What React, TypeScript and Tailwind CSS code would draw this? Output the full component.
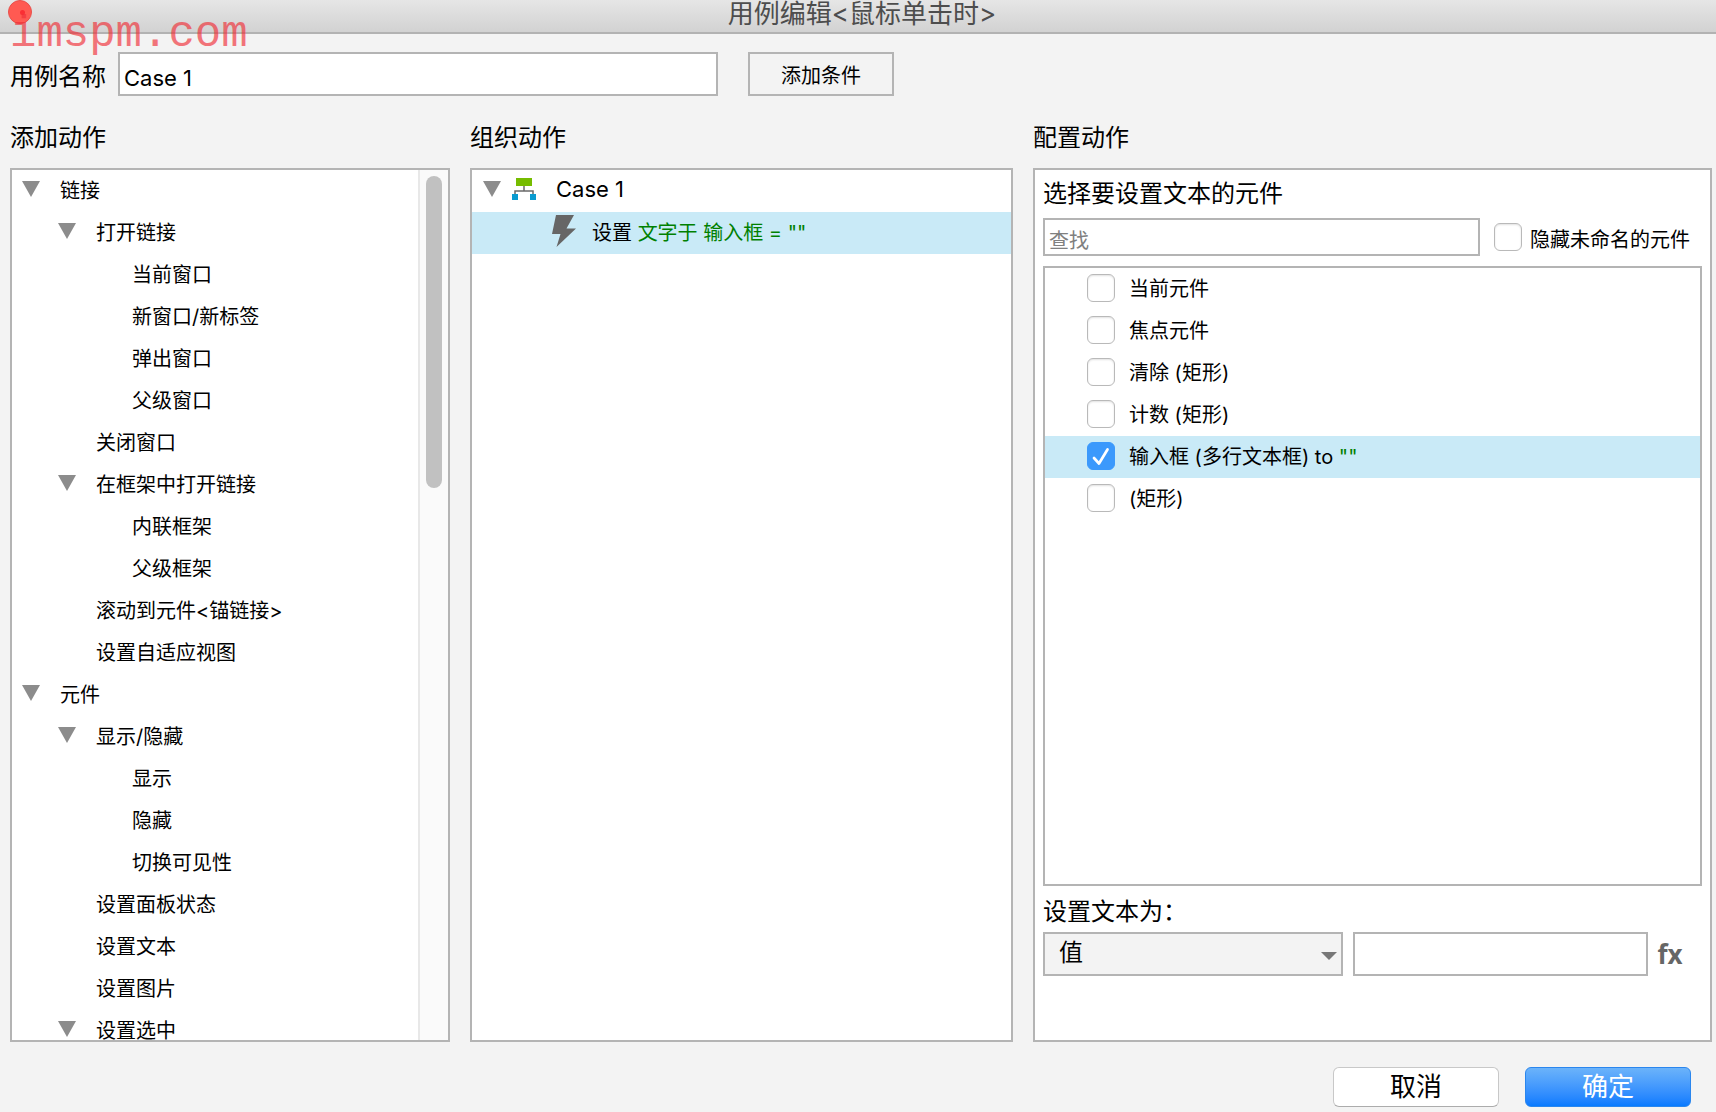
import { useState } from 'react';

interface TreeNode {
  label: string;
  level: number;
  open?: boolean;
}

const actions: TreeNode[] = [
  { label: '链接', level: 0, open: true },
  { label: '打开链接', level: 1, open: true },
  { label: '当前窗口', level: 2 },
  { label: '新窗口/新标签', level: 2 },
  { label: '弹出窗口', level: 2 },
  { label: '父级窗口', level: 2 },
  { label: '关闭窗口', level: 1 },
  { label: '在框架中打开链接', level: 1, open: true },
  { label: '内联框架', level: 2 },
  { label: '父级框架', level: 2 },
  { label: '滚动到元件<锚链接>', level: 1 },
  { label: '设置自适应视图', level: 1 },
  { label: '元件', level: 0, open: true },
  { label: '显示/隐藏', level: 1, open: true },
  { label: '显示', level: 2 },
  { label: '隐藏', level: 2 },
  { label: '切换可见性', level: 2 },
  { label: '设置面板状态', level: 1 },
  { label: '设置文本', level: 1 },
  { label: '设置图片', level: 1 },
  { label: '设置选中', level: 1, open: true },
];

const indents = ['pl-2.5', 'pl-[46px]', 'pl-[82px]'];

const initialWidgets = [
  { name: '当前元件', checked: false },
  { name: '焦点元件', checked: false },
  { name: '清除 (矩形)', checked: false },
  { name: '计数 (矩形)', checked: false },
  { name: '输入框 (多行文本框) to', value: '""', checked: true },
  { name: '(矩形)', checked: false },
];

const Arrow = () => (
  <svg className="w-[18px] h-4 shrink-0 fill-[#8c8c8c]" viewBox="0 0 18 16" aria-hidden="true">
    <path d="M0 0h18L9 16z" />
  </svg>
);

const CaseIcon = () => (
  <svg className="w-6 h-[22px] shrink-0" viewBox="0 0 24 22" aria-hidden="true">
    <path d="M12 8v5M3 17v-4h18v4" fill="none" stroke="#6a6a6a" strokeWidth="1.5" />
    <path d="M4 0h16v8H4z" fill="#76bc00" />
    <path d="M0 16h6v6H0zM18 16h6v6h-6z" fill="#0a9bd0" />
  </svg>
);

const Bolt = () => (
  <svg className="w-6 h-8 shrink-0 fill-[#666]" viewBox="0 0 24 32" aria-hidden="true">
    <path d="M4 0h18l-7.500 13.500H24L4.500 32l4-13H0z" />
  </svg>
);

interface CheckBoxProps {
  id: string;
  checked: boolean;
  onChange: () => void;
}

const CheckBox = ({ id, checked, onChange }: CheckBoxProps) => (
  <span className="relative w-7 h-7 shrink-0">
    <input
      id={id}
      type="checkbox"
      checked={checked}
      onChange={onChange}
      className="block appearance-none w-7 h-7 rounded-md bg-white border border-[#b9b9b9] shadow-[inset_0_1px_2px_rgba(0,0,0,0.12)] checked:bg-[#3b99fc] checked:border-[#3b99fc] checked:shadow-none"
    />
    {checked && (
      <svg className="absolute inset-0 w-7 h-7 pointer-events-none" viewBox="0 0 28 28" aria-hidden="true">
        <path d="M7 16l5 5.500L20.500 7.500" fill="none" stroke="#fff" strokeWidth="2.700" strokeLinecap="round" strokeLinejoin="round" />
      </svg>
    )}
  </span>
);

const ActionTree = () => (
  <div className="flex h-full">
    <ul className="flex-1 min-w-0 overflow-hidden">
      {actions.map(({ label, level, open }) => (
        <li key={label} className={`flex items-center h-[42px] gap-5 ${indents[level]}`}>
          <span className="flex w-[18px] pb-1 shrink-0">{open && <Arrow />}</span>
          <span className="whitespace-nowrap">{label}</span>
        </li>
      ))}
    </ul>
    <div className="w-[30px] shrink-0 bg-[#fafafa] border-l-2 border-[#e8e8e8] pt-1.5 pl-1.5">
      <div className="w-4 h-[312px] rounded-full bg-[#c1c1c1]" />
    </div>
  </div>
);

const CaseTree = () => (
  <ul>
    <li className="flex items-center h-[42px] pl-[11px] pb-1">
      <Arrow />
      <span className="ml-[11px]">
        <CaseIcon />
      </span>
      <span className="ml-5 text-[22px]">Case 1</span>
    </li>
    <li className="flex items-center h-[42px] pl-20 bg-[#c9eaf7]">
      <span className="pb-1">
        <Bolt />
      </span>
      <span className="ml-4 whitespace-pre">
        设置 <span className="text-[#008000]">文字于 输入框 = ""</span>
      </span>
    </li>
  </ul>
);

const ConfigPanel = () => {
  const [widgets, setWidgets] = useState(initialWidgets);
  const [hideUnnamed, setHideUnnamed] = useState(false);
  const [text, setText] = useState('');

  const toggle = (index: number) =>
    setWidgets(widgets.map((w, i) => (i === index ? { ...w, checked: !w.checked } : w)));

  return (
    <div className="flex flex-col h-full px-2 pt-1.5">
      <h3 className="text-[24px] leading-9">选择要设置文本的元件</h3>
      <div className="flex items-center mt-1.5 pr-3">
        <input
          type="text"
          aria-label="查找"
          placeholder="查找"
          className="flex-1 min-w-0 h-[38px] px-1 pt-2 bg-white border-2 border-[#b4b4b4] placeholder:text-[#808080]"
        />
        <label htmlFor="hide-unnamed" className="flex items-center gap-2 ml-3.5 whitespace-nowrap">
          <CheckBox id="hide-unnamed" checked={hideUnnamed} onChange={() => setHideUnnamed(!hideUnnamed)} />
          <span className="pt-1.5">隐藏未命名的元件</span>
        </label>
      </div>
      <ul className="flex-1 mt-2.5 border-2 border-[#b4b4b4]">
        {widgets.map(({ name, value, checked }, i) => (
          <li key={name} className={`flex items-center h-[42px] pl-[42px] ${checked ? 'bg-[#c9eaf7]' : ''}`}>
            <span className="pb-0.5">
              <CheckBox id={`widget-${i}`} checked={checked} onChange={() => toggle(i)} />
            </span>
            <label htmlFor={`widget-${i}`} className="ml-3.5 whitespace-pre">
              {name}
              {value && <span className="text-[#008000]"> {value}</span>}
            </label>
          </li>
        ))}
      </ul>
      <label htmlFor="text-value" className="mt-2 text-[24px] leading-9">
        设置文本为：
      </label>
      <div className="flex items-center mt-0.5 mb-16 pr-3.5">
        <div className="relative w-[300px]">
          <select
            aria-label="类型"
            className="block appearance-none w-full h-11 pl-3.5 pb-0.5 text-[24px] bg-[#f3f3f3] border-2 border-[#b4b4b4]"
          >
            <option>值</option>
          </select>
          <svg className="absolute right-1.5 top-5 w-4 h-2 pointer-events-none fill-[#777]" viewBox="0 0 16 8" aria-hidden="true">
            <path d="M0 0h16L8 8z" />
          </svg>
        </div>
        <input
          id="text-value"
          type="text"
          value={text}
          onChange={(e) => setText(e.target.value)}
          className="flex-1 min-w-0 h-11 ml-2.5 px-2 bg-white border-2 border-[#b4b4b4]"
        />
        <button type="button" className="w-9 ml-1 text-[26px] leading-8 font-bold text-[#666] font-['Open_Sans',sans-serif]">
          fx
        </button>
      </div>
    </div>
  );
};

export default function App() {
  const [caseName, setCaseName] = useState('Case 1');

  return (
    <div className="relative flex flex-col h-screen min-h-[700px] overflow-hidden bg-[#f3f3f3] text-black text-[20px] font-['Inter','Noto_Sans_CJK_SC',sans-serif]">
      <header className="flex justify-center h-[34px] shrink-0 pl-2 border-b-2 border-[#b2b2b2] bg-linear-to-b from-[#e6e6e6] to-[#d2d2d2]">
        <h1 className="text-[26px] leading-7 text-[#4d4d4d]">用例编辑&lt;鼠标单击时&gt;</h1>
      </header>

      <div className="absolute left-2 top-0 pointer-events-none">
        <svg className="w-6 h-6" viewBox="0 0 24 24" aria-hidden="true">
          <circle cx="12" cy="12" r="11.500" fill="#ff5a52" stroke="#e8504c" />
          <circle cx="14.500" cy="12.500" r="2.500" fill="#fa2f34" />
        </svg>
        <span className="absolute left-0.5 top-3 text-[44px] leading-[44px] text-[#f03038] opacity-65 font-['Liberation_Mono',monospace]">
          imspm.com
        </span>
      </div>

      <div className="flex items-center mt-[18px] pl-2.5 shrink-0">
        <label htmlFor="case-name" className="pt-1.5 text-[24px] leading-9">
          用例名称
        </label>
        <input
          id="case-name"
          type="text"
          value={caseName}
          onChange={(e) => setCaseName(e.target.value)}
          className="w-[600px] h-11 ml-3 px-1 pt-2 text-[22px] bg-white border-2 border-[#b4b4b4]"
        />
        <button type="button" className="w-[146px] h-11 ml-[30px] pt-1 border-2 border-[#b4b4b4]">
          添加条件
        </button>
      </div>

      <main className="flex flex-1 min-h-0 gap-5 mt-6 pl-2.5 pr-1">
        <section className="flex flex-col w-[440px] shrink-0">
          <h2 className="h-12 text-[24px] leading-9">添加动作</h2>
          <div className="flex-1 min-h-0 bg-white border-2 border-[#b4b4b4]">
            <ActionTree />
          </div>
        </section>
        <section className="flex flex-col w-[543px] shrink-0">
          <h2 className="h-12 text-[24px] leading-9">组织动作</h2>
          <div className="flex-1 min-h-0 bg-white border-2 border-[#b4b4b4]">
            <CaseTree />
          </div>
        </section>
        <section className="flex flex-col flex-1 min-w-0">
          <h2 className="h-12 text-[24px] leading-9">配置动作</h2>
          <div className="flex-1 min-h-0 bg-white border-2 border-[#b4b4b4]">
            <ConfigPanel />
          </div>
        </section>
      </main>

      <footer className="flex justify-end gap-[26px] h-[70px] shrink-0 pt-[25px] pr-[25px]">
        <button
          type="button"
          className="w-[166px] h-10 rounded-md bg-white border border-[#c8c8c8] border-b-[#acacac] text-[26px] leading-[36px]"
        >
          取消
        </button>
        <button
          type="button"
          className="w-[166px] h-10 rounded-md border border-[#2a86ee] bg-linear-to-b from-[#6bb3fa] to-[#067aff] text-white text-[26px] leading-[36px]"
        >
          确定
        </button>
      </footer>
    </div>
  );
}
